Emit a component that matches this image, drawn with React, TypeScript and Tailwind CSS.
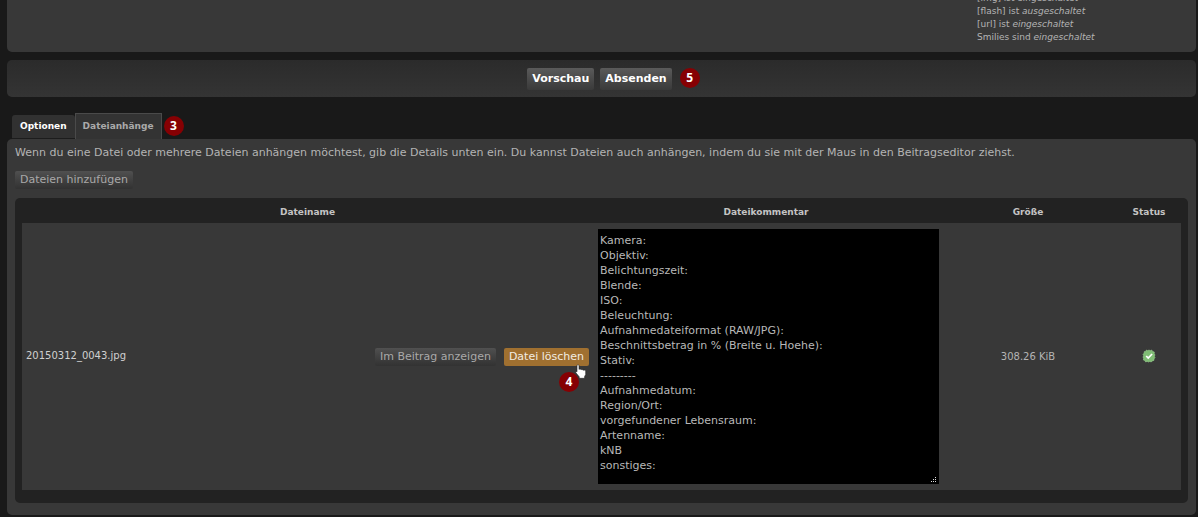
import React from "react";

const COMMENT = [
  "Kamera:",
  "Objektiv:",
  "Belichtungszeit:",
  "Blende:",
  "ISO:",
  "Beleuchtung:",
  "Aufnahmedateiformat (RAW/JPG):",
  "Beschnittsbetrag in % (Breite u. Hoehe):",
  "Stativ:",
  "---------",
  "Aufnahmedatum:",
  "Region/Ort:",
  "vorgefundener Lebensraum:",
  "Artenname:",
  "kNB",
  "sonstiges:",
].join("\n");

function Badge({ children, className = "" }: { children: React.ReactNode; className?: string }) {
  return (
    <span
      className={`flex size-5 items-center justify-center rounded-full bg-[#860003] font-['Open_Sans',sans-serif] text-xs font-bold text-white ${className}`}
    >
      {children}
    </span>
  );
}

function SubmitButton({ children }: { children: React.ReactNode }) {
  return (
    <button
      type="button"
      className="h-[22px] rounded-xs bg-linear-to-b from-[#5a5a5a] to-[#3a3a3a] px-[5px] pt-0.5 text-[11px] font-bold text-white"
    >
      {children}
    </button>
  );
}

function SmallButton({ children }: { children: React.ReactNode }) {
  return (
    <button
      type="button"
      className="h-[18px] rounded-xs bg-linear-to-b from-[#505050] to-[#323232] px-[5px] text-[11px] leading-[18px] text-[#a9a9a9]"
    >
      {children}
    </button>
  );
}

function HandCursor() {
  return (
    <svg viewBox="0 0 12 15" className="absolute top-4 right-[2px] h-[15px] w-3" aria-hidden="true">
      <path
        d="M2 1.5C2 .6 4 .6 4 1.5V5.5C4.6 4.8 6 5 6.1 5.8C6.8 5.2 8 5.5 8.1 6.3C9 5.8 10.6 6.2 10.7 7.4V10.5L9.6 12.5V14.3H4.2V12.8L.9 8.8C.3 7.9 1.3 7.1 2 7.8Z"
        fill="#fff"
        stroke="#222"
        strokeWidth=".6"
      />
    </svg>
  );
}

function ResizeGrip() {
  return (
    <svg viewBox="0 0 6 6" className="absolute right-0.5 bottom-px size-1.5" aria-hidden="true">
      <path d="M4 0h1v1H4zM2 2h1v1H2zM4 2h1v1H4zM0 4h1v1H0zM2 4h1v1H2zM4 4h1v1H4z" fill="#e0e0e0" />
    </svg>
  );
}

function StatusIcon() {
  return (
    <svg viewBox="0 0 14 14" className="mx-auto size-[14px]" role="img" aria-label="OK">
      <path
        d="M4.4 1 5.8 1.7 7 1 8.2 1.7 9.7 1 10.6 2.5 12.3 3 12.2 4.7 13 6 12.3 7.2 13 8.6 12 9.9 11.9 11.4 10.2 11.9 9.2 13 7.8 12.4 6.5 13 5.2 12.4 3.6 12.9 2.9 11.5 1.4 11 1.6 9.4 1 8 1.7 6.8 1 5.3 2.1 4.2 2.3 2.6 3.8 2.4Z"
        fill="#7fbd74"
        stroke="#9bcf90"
        strokeWidth=".6"
      />
      <path d="m4.2 7 2 2 3.9-4" fill="none" stroke="#fff" strokeWidth="1.7" />
    </svg>
  );
}

export default function App() {
  return (
    <div className="min-h-screen bg-[#191919] pr-0.5 pl-[7px] font-['DejaVu_Sans',Verdana,sans-serif] text-[11px] text-[#b4b4b4]">
      <section className="h-[52px] overflow-hidden rounded-b-[5px] bg-[#383838]">
        <ul className="-mt-2 ml-auto w-[219px] text-[9px] leading-[13px]">
          <li>[img] ist <em>eingeschaltet</em></li>
          <li>[flash] ist <em>ausgeschaltet</em></li>
          <li>[url] ist <em>eingeschaltet</em></li>
          <li>Smilies sind <em>eingeschaltet</em></li>
        </ul>
      </section>

      <section className="mt-2 flex h-[37px] items-center justify-center rounded-[5px] bg-linear-to-b from-[#2b2b2b] to-[#343434] pr-1">
        <div className="relative flex gap-1.5">
          <SubmitButton>Vorschau</SubmitButton>
          <SubmitButton>Absenden</SubmitButton>
          <Badge className="absolute top-0 left-full ml-2">5</Badge>
        </div>
      </section>

      <nav className="mt-4 flex h-[26px] items-end pl-[5px] text-[9px] font-bold">
        <a
          href="#optionen"
          className="flex h-6 items-center rounded-t-[3px] border-b border-[#1c1c1c] bg-[#313131] px-2 text-white"
        >
          Optionen
        </a>
        <a
          href="#dateien"
          className="flex h-[26px] items-center border border-b-0 border-[#4a4a4a] bg-[#333333] px-[7px] text-[#aaaaaa]"
        >
          Dateianhänge
        </a>
        <Badge className="mb-[3px] ml-0.5">3</Badge>
      </nav>

      <main className="rounded-[5px] bg-[#383838] px-2 pt-[5px] pb-3">
        <p className="leading-[18px]">
          Wenn du eine Datei oder mehrere Dateien anhängen möchtest, gib die Details unten ein. Du kannst Dateien auch
          anhängen, indem du sie mit der Maus in den Beitragseditor ziehst.
        </p>
        <div className="mt-[9px] flex">
          <SmallButton>Dateien hinzufügen</SmallButton>
        </div>

        <div className="mt-[9px] rounded-[5px] bg-[#222222] px-[7px] pb-[13px]">
          <table className="w-full table-fixed border-collapse">
            <colgroup>
              <col />
              <col className="w-[346px]" />
              <col className="w-[178px]" />
              <col className="w-16" />
            </colgroup>
            <thead>
              <tr className="h-[25px] text-[9px] text-[#c4c4c4]">
                <th className="p-0 pt-1">Dateiname</th>
                <th className="p-0 pt-1">Dateikommentar</th>
                <th className="p-0 pt-1">Größe</th>
                <th className="p-0 pt-1">Status</th>
              </tr>
            </thead>
            <tbody>
              <tr className="bg-[#383838]">
                <td className="p-0 pr-1 pl-1">
                  <div className="flex items-start justify-between">
                    <span className="text-[10px] leading-[15px] text-[#d0d0d0]">20150312_0043.jpg</span>
                    <div className="flex gap-2">
                      <SmallButton>Im Beitrag anzeigen</SmallButton>
                      <div className="relative">
                        <button
                          type="button"
                          className="h-[18px] rounded-xs bg-[#a07030] px-[5px] text-[11px] leading-[18px] text-[#f2ece2]"
                        >
                          Datei löschen
                        </button>
                        <HandCursor />
                        <Badge className="absolute top-6 right-[10px]">4</Badge>
                      </div>
                    </div>
                  </div>
                </td>
                <td className="p-0 py-1.5 pl-[5px]">
                  <div className="relative">
                    <textarea
                      aria-label="Dateikommentar"
                      defaultValue={COMMENT}
                      className="block h-[255px] w-full resize-none overflow-hidden bg-black px-0.5 py-1 text-[11px] leading-[15px] text-[#b8b8b8] outline-none"
                    />
                    <ResizeGrip />
                  </div>
                </td>
                <td className="p-0 text-center text-[10px]">308.26 KiB</td>
                <td className="p-0 pb-0.5">
                  <StatusIcon />
                </td>
              </tr>
            </tbody>
          </table>
        </div>
      </main>
    </div>
  );
}
